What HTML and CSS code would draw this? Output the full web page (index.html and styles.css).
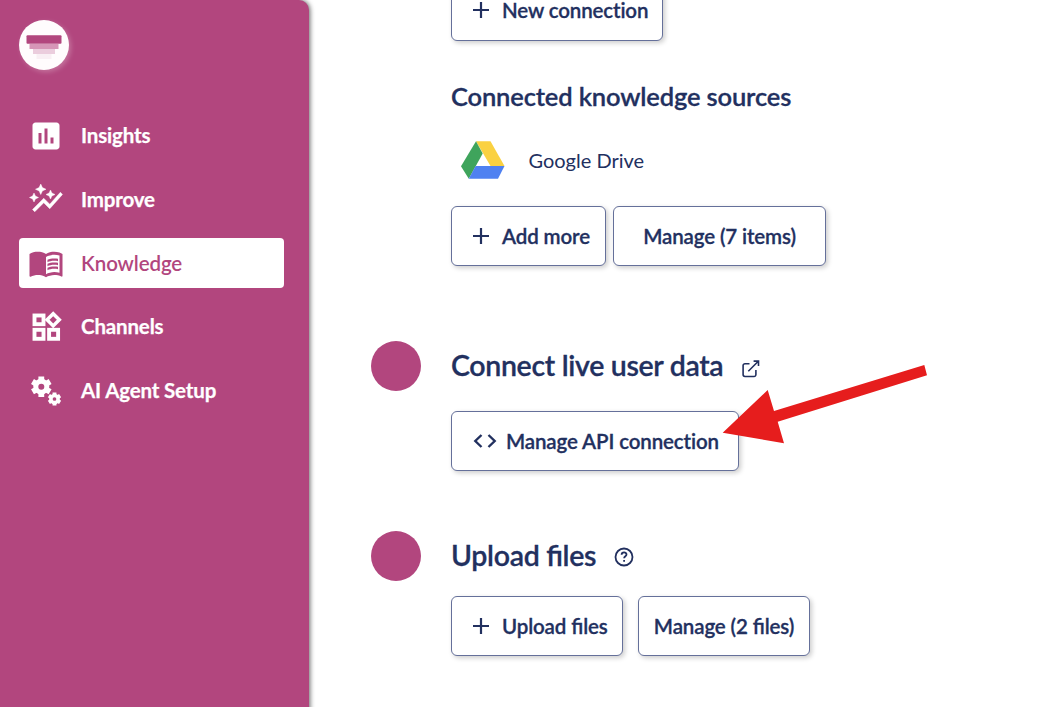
FILE: index.html
```
<!DOCTYPE html>
<html lang="en">
<head>
<meta charset="utf-8">
<title>Knowledge</title>
<link rel="stylesheet" href="styles.css">
</head>
<body>
<div class="app">
  <aside class="sidebar">
    <div class="logo">
      <svg width="50" height="50" viewBox="0 0 50 50">
        <rect x="7.500" y="15.300" width="35" height="8.500" rx="1" fill="#b2467e"/>
        <rect x="10.500" y="24" width="29" height="5" fill="#d696b7"/>
        <rect x="14" y="29" width="22" height="5" fill="#ebcddd"/>
        <rect x="17.500" y="34" width="15" height="5" fill="#f9eff4"/>
      </svg>
    </div>
    <nav class="nav">
      <a class="nav-item">
        <svg class="icon" viewBox="0 0 24 24"><path d="M19 3H5c-1.1 0-2 .9-2 2v14c0 1.100.9 2 2 2h14c1.100 0 2-.9 2-2V5c0-1.100-.9-2-2-2zM9 17H7v-7h2v7zm4 0h-2V7h2v10zm4 0h-2v-4h2v4z"/></svg>
        <span>Insights</span>
      </a>
      <a class="nav-item">
        <svg class="icon icon-graph" viewBox="0 0 24 24"><path d="M14.060 9.940L12 9l2.060-.94L15 6l.94 2.060L18 9l-2.060.94L15 12l-.94-2.060zM4 14l.94-2.060L7 11l-2.060-.94L4 8l-.94 2.060L1 11l2.060.94L4 14zm4.500-5l1.090-2.410L12 5.500 9.590 4.410 8.500 2 7.410 4.410 5 5.500l2.410 1.090L8.500 9zm-4 11.500l6-6.010 4 4L23 8.930l-1.410-1.410-7.090 7.970-4-4L3 19l1.500 1.500z"/></svg>
        <span>Improve</span>
      </a>
      <a class="nav-item active">
        <svg class="icon" viewBox="0 0 24 24"><path d="M21 5c-1.110-.35-2.330-.5-3.500-.5-1.950 0-4.050.4-5.500 1.500-1.450-1.100-3.550-1.500-5.500-1.500S2.450 4.900 1 6v14.650c0 .25.25.5.5.5.1 0 .15-.05.25-.05C3.100 20.450 5.050 20 6.500 20c1.950 0 4.050.4 5.500 1.500 1.350-.85 3.800-1.500 5.500-1.500 1.650 0 3.350.3 4.750 1.050.1.050.15.050.25.050.25 0 .5-.25.5-.5V6c-.6-.45-1.250-.75-2-1zm0 13.500c-1.100-.35-2.300-.5-3.500-.5-1.700 0-4.150.65-5.500 1.500V8c1.350-.85 3.800-1.500 5.500-1.500 1.200 0 2.400.15 3.500.5v11.500z"/><path d="M17.500 10.500c.88 0 1.730.09 2.500.26V9.240c-.79-.15-1.640-.24-2.500-.24-1.700 0-3.240.29-4.500.83v1.660c1.130-.64 2.700-.99 4.500-.99zM13 12.490v1.660c1.130-.64 2.700-.99 4.500-.99.88 0 1.730.09 2.500.26V11.900c-.79-.15-1.640-.24-2.500-.24-1.700 0-3.240.3-4.500.83zm4.500 1.840c-1.700 0-3.240.29-4.500.83v1.660c1.130-.64 2.700-.99 4.500-.99.88 0 1.730.09 2.500.26v-1.520c-.79-.16-1.640-.24-2.500-.24z"/></svg>
        <span>Knowledge</span>
      </a>
      <a class="nav-item">
        <svg class="icon" viewBox="0 0 36 36"><g fill="none" stroke="currentColor" stroke-width="3.900"><rect x="6.500" y="6.500" width="9" height="8.700"/><rect x="6.500" y="20.800" width="9" height="9"/><rect x="21.100" y="20.800" width="9" height="9"/><path d="M25.200 4.700l6.100 6.100-6.100 6.100-6.100-6.100z" stroke-width="3.500"/></g></svg>
        <span>Channels</span>
      </a>
      <a class="nav-item">
        <svg class="icon" viewBox="0 0 36 36"><circle cx="13.300" cy="13.700" r="5.500" fill="none" stroke="currentColor" stroke-width="5"/><g fill="none" stroke="currentColor" stroke-width="5.800" stroke-linejoin="round"><path d="M13.300 3.500v4.200M13.300 19.700v4.200M4.500 8.600l3.600 2.100M18.500 16.700l3.600 2.100M4.500 18.800l3.600-2.100M18.500 10.700l3.600-2.100"/></g><circle cx="26.500" cy="26" r="3.600" fill="none" stroke="currentColor" stroke-width="3.500"/><path d="M26.500 19.500v2.500M26.500 30v2.500M20.900 22.700l2.100 1.300M30 28l2.100 1.300M20.900 29.300L23 28M30 24l2.100-1.300" fill="none" stroke="currentColor" stroke-width="3.900"/></svg>
        <span>AI Agent Setup</span>
      </a>
    </nav>
  </aside>

  <main class="content">
    <div class="button-row">
      <button class="btn btn-plus btn-new"><svg class="plus" viewBox="0 0 18 18"><path d="M9 1v16M1 9h16"/></svg><span>New connect&zwnj;ion</span></button>
    </div>
    <h3 class="subtitle">Connected knowledge sources</h3>
    <div class="source">
      <svg class="drive" width="44" height="38" viewBox="0 0 44 38">
        <path d="M15 .3h14.500L43.500 25H29.500z" fill="#fad141"/>
        <path d="M15 .3l6.700 12.300L7.800 37.800 0 25.300z" fill="#3fa45c"/>
        <path d="M14.600 25h28.900l-6.500 12.800H7.800z" fill="#4f81f1"/>
      </svg>
      <span>Google Drive</span>
    </div>
    <div class="button-row">
      <button class="btn btn-plus btn-add"><svg class="plus" viewBox="0 0 18 18"><path d="M9 1v16M1 9h16"/></svg><span>Add more</span></button>
      <button class="btn btn-items"><span>Manage (7 items)</span></button>
    </div>

    <section class="step step-live">
      <div class="dot"></div>
      <div class="step-body">
        <h2 class="title"><span>Connect live user data</span>
          <svg class="external" width="18" height="18" viewBox="0 0 18 18"><path d="M7.500 3.700H3A1.900 1.900 0 0 0 1.100 5.600v9A1.900 1.900 0 0 0 3 16.500h9a1.900 1.900 0 0 0 1.900-1.900V10M6.300 11.200L16.300 1.200M11.600 1.100h4.900V6"/></svg>
        </h2>
        <div class="button-row">
          <button class="btn btn-api"><svg class="code" width="24" height="16" viewBox="0 0 24 16"><path d="M8.500 2L2.300 8l6.200 6M15.500 2l6.200 6-6.200 6"/></svg><span>Manage API connect&zwnj;ion</span></button>
        </div>
      </div>
    </section>

    <section class="step step-upload">
      <div class="dot"></div>
      <div class="step-body">
        <h2 class="title"><span>Upload files</span>
          <svg class="help" width="20" height="20" viewBox="0 0 20 20"><circle cx="10" cy="10" r="8.500"/><path d="M7.600 7.800c.1-3.300 5-3 4.900-.2 0 1.700-2.400 1.700-2.400 3.700M10.100 13v1.800"/></svg>
        </h2>
        <div class="button-row wide">
          <button class="btn btn-plus btn-upload"><svg class="plus" viewBox="0 0 18 18"><path d="M9 1v16M1 9h16"/></svg><span>Upload files</span></button>
          <button class="btn btn-files"><span>Manage (2 files)</span></button>
        </div>
      </div>
    </section>
  </main>

  <svg class="arrow" width="206" height="80" viewBox="0 0 206 80"><path d="M.7 68.700L45.700 26l6.300 21L202.300 1l2.700 10.300L55.700 57.700 62 79.300z"/></svg>
</div>
</body>
</html>
```
FILE: styles.css
```
* { box-sizing: border-box; }

body {
  margin: 0;
  background: #fff;
  color: #22305f;
  font-family: Lato, sans-serif;
  font-feature-settings: "liga" 1;
  overflow: hidden;
}

.app {
  position: relative;
  display: flex;
  height: 707px;
  overflow: hidden;
}

.sidebar {
  flex: none;
  width: 309px;
  height: 720px;
  padding: 20px 25px 0 19px;
  background: #b2467e;
  border-radius: 0 10px 10px 0;
  box-shadow: 1px 0 5px rgba(0, 0, 0, .6);
}

.logo {
  width: 50px;
  height: 50px;
  border-radius: 50%;
  background: #fffcfd;
  box-shadow: 2px 2px 5px rgba(255, 255, 255, .25);
}

.logo svg { display: block; }

.nav {
  display: flex;
  flex-direction: column;
  gap: 13.75px;
  margin-top: 40.5px;
}

.nav-item {
  display: flex;
  align-items: center;
  gap: 17px;
  height: 50px;
  padding-left: 9px;
  border-radius: 4px;
  color: #fff;
  font-size: 20.5px;
  font-weight: 700;
  letter-spacing: -.16px;
  -webkit-text-stroke: .25px currentColor;
}

.nav-item span { padding-bottom: 1px; }

.nav-item.active {
  background: #fff;
  color: #b2467e;
  font-weight: 600;
  letter-spacing: -.1px;
  -webkit-text-stroke: 0;
}

.nav-item.active span { padding-bottom: 0; }

.icon {
  flex: none;
  width: 36px;
  height: 36px;
  fill: currentColor;
  -webkit-text-stroke: 0;
}

.icon-graph {
  stroke: currentColor;
  stroke-width: .3;
}

.content {
  flex: 1;
  margin-top: -19px;
  padding-left: 142px;
}

.button-row {
  display: flex;
  gap: 7px;
}

.button-row.wide { gap: 15px; }

.btn {
  display: flex;
  align-items: center;
  height: 60px;
  padding: 0 15px;
  border: 1px solid #65709a;
  border-radius: 6px;
  background: #fff;
  box-shadow: 2px 2px 5px rgba(0, 0, 0, .2);
  color: #22305f;
  font: 600 20.5px Lato, sans-serif;
  font-feature-settings: "liga" 1;
  letter-spacing: -.12px;
  -webkit-text-stroke: .3px currentColor;
  white-space: nowrap;
}

.btn span { padding-bottom: 1px; }
.btn-plus { padding: 0 0 0 20px; }
.btn-new { width: 212px; }
.btn-new span { padding-bottom: 3px; }
.btn-add { width: 155px; }
.btn-upload { width: 172px; }
.btn-items { width: 213px; justify-content: center; }
.btn-files { width: 172px; justify-content: center; }
.btn-api { width: 288px; padding: 0 0 0 21px; }

.plus {
  width: 18px;
  height: 18px;
  margin-right: 12px;
  fill: none;
  stroke: #22305f;
  stroke-width: 2.2;
}

.btn-new .plus { margin-bottom: 2px; }

.code {
  margin-right: 9px;
  fill: none;
  stroke: #22305f;
  stroke-width: 2.4;
}

.subtitle {
  margin: 39px 0 0;
  font-size: 25.5px;
  line-height: 32px;
  font-weight: 600;
  letter-spacing: -.15px;
  -webkit-text-stroke: .3px currentColor;
}

.source {
  display: flex;
  align-items: center;
  gap: 24px;
  height: 38px;
  margin: 29px 0 27px;
  padding-left: 9.5px;
  font-size: 20px;
}

.step {
  display: flex;
  gap: 30px;
  margin-left: -80px;
}

.step-live { margin-top: 75px; }
.step-upload { margin-top: 60px; }

.dot {
  flex: none;
  width: 50px;
  height: 50px;
  border-radius: 50%;
  background: #b2467e;
}

.title {
  display: flex;
  align-items: center;
  height: 50px;
  margin: 0 0 20px;
  font-size: 28.5px;
  font-weight: 600;
  letter-spacing: -.32px;
  -webkit-text-stroke: .3px currentColor;
}

.title span { padding-bottom: 2px; }

.step-upload .title { margin-bottom: 15px; }

.external,
.help {
  fill: none;
  stroke: #22305f;
  stroke-width: 1.6;
}

.external { margin: 5px 0 0 18.5px; }
.help { margin: 1px 0 0 17.5px; stroke-width: 1.8; }

.arrow {
  position: absolute;
  left: 722px;
  top: 364px;
  fill: #e61d1d;
}
```
